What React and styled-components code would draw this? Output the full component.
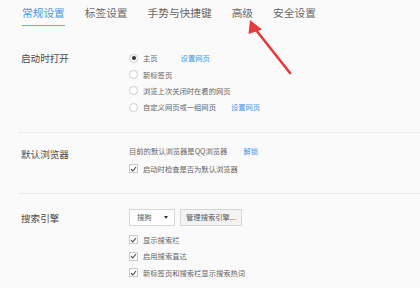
import React from "react";
import styled, { createGlobalStyle } from "styled-components";

const GlobalStyle = createGlobalStyle`
  html, body {
    margin: 0;
    padding: 0;
    background: #fafafa;
  }
  body {
    font-family: "Noto Sans CJK SC", "Noto Sans", sans-serif;
    color: #555;
  }
`;

const Page = styled.div`
  position: relative;
  width: 420px;
  height: 288px;
  overflow: hidden;
  background: #fafafa;
`;

const TabBar = styled.div`
  display: flex;
  gap: 20px;
  padding: 4px 0 0 22px;
  height: 24px;
`;

const Tab = styled.div`
  font-size: 10.7px;
  line-height: 18px;
  height: 21px;
  color: ${props => (props.active ? "#4a94ea" : "#666")};
  border-bottom: 1.5px solid ${props => (props.active ? "#6aaaf0" : "transparent")};
  white-space: nowrap;
`;

const Section = styled.div`
  display: grid;
  grid-template-columns: 108px 1fr;
  margin-left: 18px;
  padding: ${props => props.pad};
  padding-left: 3px;
  border-bottom: ${props => (props.last ? "none" : "1px solid #ebebeb")};
`;

const Label = styled.div`
  font-size: 9.6px;
  color: #4a4a4a;
  line-height: 14px;
  padding-top: ${props => props.offset || 0}px;
`;

const Options = styled.div`
  display: flex;
  flex-direction: column;
`;

const Row = styled.div`
  display: flex;
  align-items: center;
  height: ${props => props.h || 16.4}px;
  font-size: 7.3px;
  color: #666;
  white-space: nowrap;
`;

const Radio = styled.span`
  box-sizing: border-box;
  width: 9px;
  height: 9px;
  border-radius: 50%;
  border: 1px solid #cfcfcf;
  background: #fff;
  margin-right: 5px;
  display: flex;
  align-items: center;
  justify-content: center;
  &::after {
    content: "";
    width: 4px;
    height: 4px;
    border-radius: 50%;
    background: ${props => (props.checked ? "#333" : "transparent")};
  }
`;

const Check = styled.span`
  box-sizing: border-box;
  width: 9px;
  height: 9px;
  border: 1px solid #c9c9c9;
  background: #fff;
  margin-right: 5px;
  display: flex;
  align-items: center;
  justify-content: center;
`;

const Link = styled.span`
  color: #4a94ea;
  margin-left: ${props => props.gap}px;
`;

const Controls = styled.div`
  display: flex;
  gap: 5px;
  height: 17px;
  margin-bottom: 6px;
`;

const Select = styled.div`
  box-sizing: border-box;
  width: 46px;
  border: 1px solid #d6d6d6;
  background: #fff;
  display: flex;
  align-items: center;
  justify-content: space-between;
  padding: 0 6px 0 7px;
  font-size: 7.3px;
  color: #555;
  &::after {
    content: "";
    border-left: 2.5px solid transparent;
    border-right: 2.5px solid transparent;
    border-top: 3px solid #333;
  }
`;

const Button = styled.div`
  box-sizing: border-box;
  width: 62px;
  border: 1px solid #d6d6d6;
  background: #f3f3f3;
  display: flex;
  align-items: center;
  justify-content: center;
  font-size: 7.3px;
  color: #555;
  white-space: nowrap;
`;

const ArrowLayer = styled.svg`
  position: absolute;
  left: 0;
  top: 0;
  pointer-events: none;
`;

const Tick = () => (
  <svg width="7" height="6" viewBox="0 0 7 6">
    <path d="M1 3.2 L2.8 5 L6 1" fill="none" stroke="#444" strokeWidth="1.1" />
  </svg>
);

const tabs = ["常规设置", "标签设置", "手势与快捷键", "高级", "安全设置"];

export default function App() {
  return (
    <Page>
      <GlobalStyle />
      <TabBar>
        {tabs.map((t, i) => (
          <Tab key={t} active={i === 0}>{t}</Tab>
        ))}
      </TabBar>

      <Section pad="22px 0 16px">
        <Label offset={1}>启动时打开</Label>
        <Options>
          <Row><Radio checked />主页<Link gap={23}>设置网页</Link></Row>
          <Row><Radio />新标签页</Row>
          <Row><Radio />浏览上次关闭时在看的网页</Row>
          <Row><Radio />自定义网页或一组网页<Link gap={15}>设置网页</Link></Row>
        </Options>
      </Section>

      <Section pad="9px 0 15px">
        <Label offset={5}>默认浏览器</Label>
        <Options>
          <Row h={18}>目前的默认浏览器是QQ浏览器<Link gap={16}>解锁</Link></Row>
          <Row h={18}><Check><Tick /></Check>启动时检查是否为默认浏览器</Row>
        </Options>
      </Section>

      <Section pad="15px 0 0" last>
        <Label offset={2}>搜索引擎</Label>
        <Options>
          <Controls>
            <Select>搜狗</Select>
            <Button>管理搜索引擎...</Button>
          </Controls>
          <Row><Check><Tick /></Check>显示搜索栏</Row>
          <Row><Check><Tick /></Check>启用搜索直达</Row>
          <Row><Check><Tick /></Check>新标签页和搜索栏显示搜索热词</Row>
        </Options>
      </Section>

      <ArrowLayer width="420" height="288" viewBox="0 0 420 288">
        <line x1="290" y1="73" x2="256" y2="30" stroke="#e8393a" strokeWidth="2.6" strokeLinecap="round" />
        <polygon points="250,20 262,29.5 248.5,34" fill="#e8393a" />
      </ArrowLayer>
    </Page>
  );
}
